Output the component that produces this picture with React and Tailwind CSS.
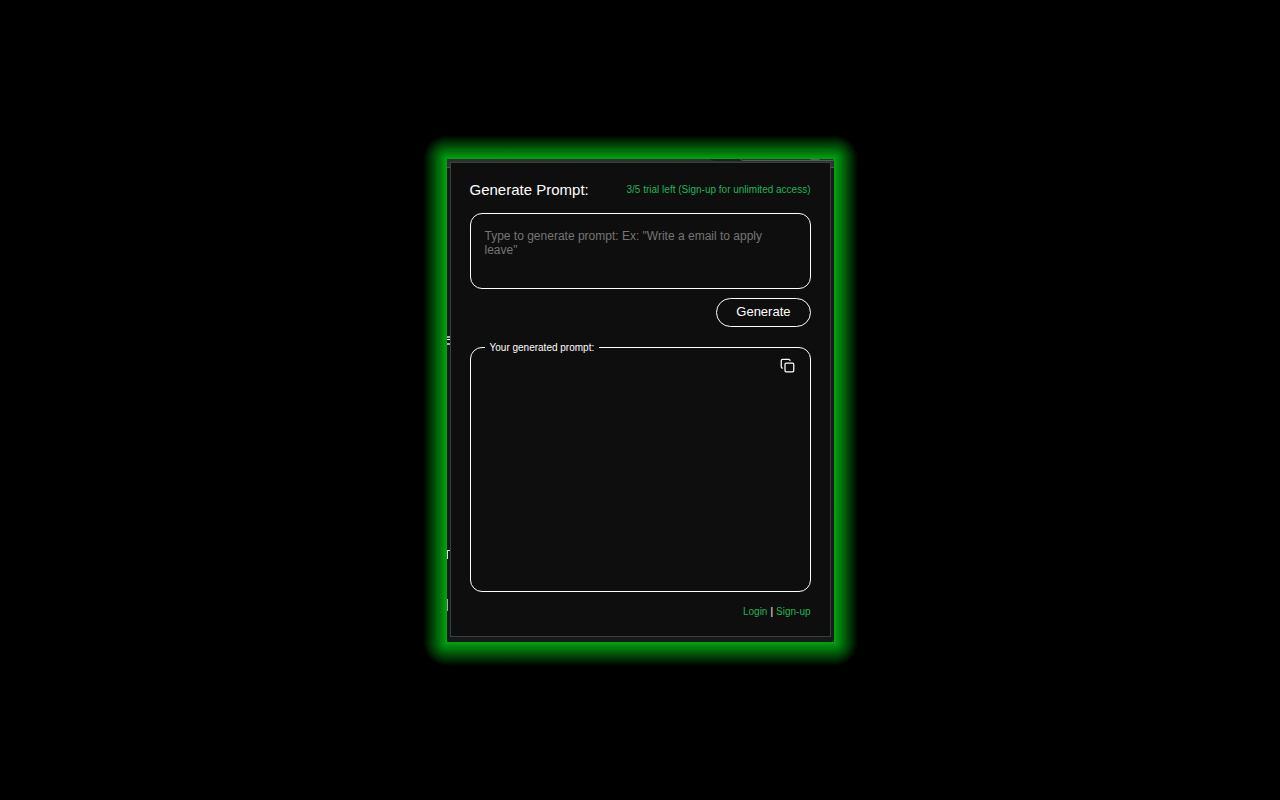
import React from "react";
import { Copy } from "lucide-react";

export default function App() {
  return (
    <main className="flex min-h-screen items-center justify-center bg-black font-['Liberation_Sans',Arial,sans-serif] text-white">
      <div className="grid w-full max-w-[435px] grid-cols-[24px_minmax(0,1fr)_24px] grid-rows-[24px_auto_24px]">
        <div className="bg-[radial-gradient(circle_at_100%_100%,#00a510_0px,#000_24px)]" />
        <div className="bg-[linear-gradient(to_top,#00a510,#000)]" />
        <div className="bg-[radial-gradient(circle_at_0%_100%,#00a510_0px,#000_24px)]" />
        <div className="bg-[linear-gradient(to_left,#00a510,#000)]" />
        <div className="relative bg-[#17181a] px-[3px] pt-[3px] pb-[5px]">
          <div className="absolute inset-x-0 top-0 h-[9px] overflow-hidden border-b border-[#505354] bg-[#303032]" aria-hidden="true">
            <div className="absolute -top-[10px] left-[262px] h-3 w-9 rounded-full bg-[#1f2021]" />
            <div className="absolute -top-[10px] right-0 h-3 w-24 rounded-l-full border border-[#58595a]" />
            <div className="absolute -top-[14px] right-[11px] size-4 rounded-full bg-[#58595a]" />
          </div>
          <div className="absolute top-[177px] left-0 flex flex-col gap-px" aria-hidden="true">
            <div className="h-[2px] w-[3px] bg-[#aaaaaa]" />
            <div className="h-px w-[3px] bg-white" />
            <div className="mt-[2px] h-[2px] w-[3px] bg-[#aaaaaa]" />
          </div>
          <div className="absolute top-[391px] left-0 h-[9px] w-[3px] border-t border-l border-[#dddddd]" aria-hidden="true" />
          <div className="absolute top-[440px] left-0 h-3 w-px bg-[#aaaaaa]" aria-hidden="true" />
          <section className="relative border border-[#3a4041] bg-[#0e0e0e] px-[19px] pt-[17px] pb-4">
            <header className="flex items-center justify-between">
              <label htmlFor="prompt" className="text-[15px] leading-5">Generate Prompt:</label>
              <span className="text-[10px] leading-5 text-[#22b455]">3/5 trial left (Sign-up for unlimited access)</span>
            </header>
            <textarea
              id="prompt"
              className="mt-[13px] block h-[76px] w-full resize-none rounded-xl border border-white bg-transparent px-[14px] py-[15px] text-[12px] leading-[14px] outline-none placeholder:text-[#757575]"
              placeholder={'Type to generate prompt: Ex: "Write a email to apply leave"'}
            />
            <div className="mt-[9px] flex justify-end">
              <button type="button" className="h-[29px] rounded-full border border-white px-[19px] text-[13px] leading-5">Generate</button>
            </div>
            <fieldset className="relative mt-[14px] h-[251px] rounded-xl border border-white px-[14px]">
              <legend className="px-[5px] text-[10px] leading-[13px]">Your generated prompt:</legend>
              <button type="button" aria-label="Copy generated prompt" className="absolute top-1 right-[15px]">
                <Copy className="size-[15px]" strokeWidth={2} />
              </button>
            </fieldset>
            <footer className="mt-[12px] flex justify-end gap-[3px] text-[10px] leading-4">
              <a href="#login" className="text-[#22b455]">Login</a>
              <span>|</span>
              <a href="#signup" className="text-[#22b455]">Sign-up</a>
            </footer>
          </section>
        </div>
        <div className="bg-[linear-gradient(to_right,#00a510,#000)]" />
        <div className="bg-[radial-gradient(circle_at_100%_0%,#00a510_0px,#000_24px)]" />
        <div className="bg-[linear-gradient(to_bottom,#00a510,#000)]" />
        <div className="bg-[radial-gradient(circle_at_0%_0%,#00a510_0px,#000_24px)]" />
      </div>
    </main>
  );
}
